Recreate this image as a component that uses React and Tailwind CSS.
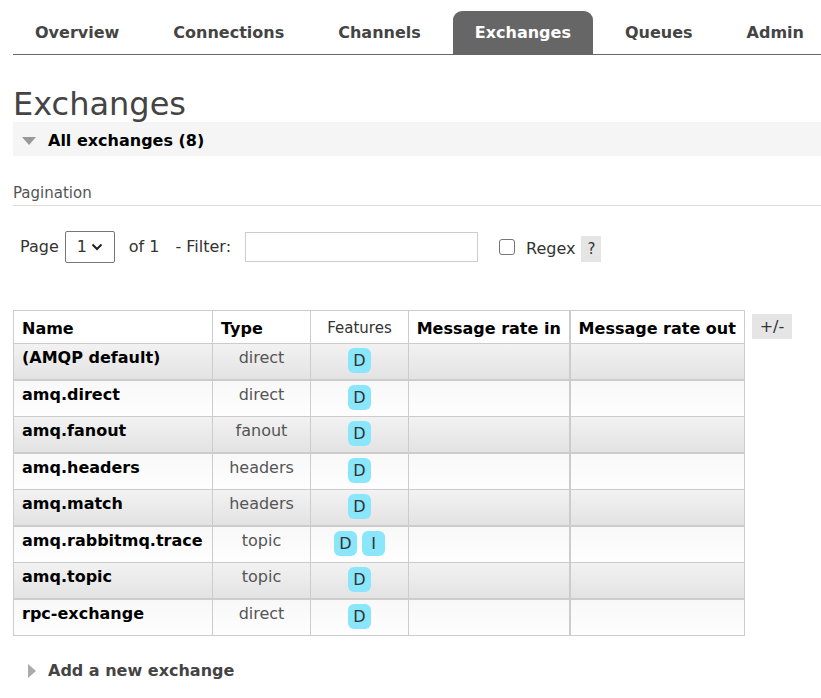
const tabs = ['Overview', 'Connections', 'Channels', 'Exchanges', 'Queues', 'Admin']

const rows = [
  { name: '(AMQP default)', type: 'direct', features: ['D'] },
  { name: 'amq.direct', type: 'direct', features: ['D'] },
  { name: 'amq.fanout', type: 'fanout', features: ['D'] },
  { name: 'amq.headers', type: 'headers', features: ['D'] },
  { name: 'amq.match', type: 'headers', features: ['D'] },
  { name: 'amq.rabbitmq.trace', type: 'topic', features: ['D', 'I'] },
  { name: 'amq.topic', type: 'topic', features: ['D'] },
  { name: 'rpc-exchange', type: 'direct', features: ['D'] },
]

export default function App() {
  return (
    <div className="min-h-screen bg-white text-[#444] font-['DejaVu_Sans',sans-serif] pl-[13px]">
      {/* nav */}
      <div className="flex items-end gap-[10px] h-[55px] border-b border-[#666]">
        {tabs.map((t) =>
          t === 'Exchanges' ? (
            <div key={t} className="h-[43px] px-[22px] bg-[#666] text-white rounded-t-[9px] flex items-center text-[16px] font-bold">
              {t}
            </div>
          ) : (
            <div key={t} className="h-[43px] px-[22px] flex items-center text-[16px] font-bold text-[#444]">
              {t}
            </div>
          )
        )}
      </div>

      <h1 className="text-[32px] leading-[36px] mt-[31px] text-[#444]">Exchanges</h1>

      <div className="h-[34px] bg-[#f5f5f5] flex items-center">
        <span className="ml-[9px] mt-[3px] w-0 h-0 border-l-[7px] border-r-[7px] border-t-[8px] border-l-transparent border-r-transparent border-t-[#999]" />
        <span className="ml-[12px] pt-[4px] text-[16px] font-bold text-black">All exchanges (8)</span>
      </div>

      <div className="mt-[27px] text-[15px] text-[#555] pb-[2px] border-b border-[#ddd] leading-[20px]">Pagination</div>

      <div className="flex items-center mt-[25px] pl-[7px] text-[16px] text-[#333]">
        <span>Page</span>
        <div className="ml-[6px] w-[50px] h-[32px] border border-[#767676] rounded-[2px] flex items-center justify-between px-[11px]">
          <span className="text-[16px]">1</span>
          <svg width="12" height="8" viewBox="0 0 12 8"><path d="M1.5 1.5 L6 6 L10.5 1.5" fill="none" stroke="#222" strokeWidth="2" /></svg>
        </div>
        <span className="ml-[14px]">of 1</span>
        <span className="ml-[16px]">- Filter:</span>
        <div className="ml-[14px] w-[233px] h-[30px] border border-[#ccc]" />
        <div className="ml-[21px] w-[16px] h-[16px] border border-[#767676] rounded-[3px]" />
        <span className="ml-[11px] mt-[4px] text-[16px]">Regex</span>
        <span className="ml-[6px] mt-[4px] h-[26px] w-[20px] bg-[#e5e5e5] flex items-center justify-center text-[15px]">?</span>
      </div>

      <div className="flex items-start mt-[47px]">
        <table className="border-collapse text-[16px] table-fixed w-[731px]">
          <colgroup>
            <col className="w-[199px]" />
            <col className="w-[98px]" />
            <col className="w-[98px]" />
            <col className="w-[161px]" />
            <col className="w-[175px]" />
          </colgroup>
          <thead>
            <tr className="h-[33px] bg-white text-black">
              <th className="border border-[#ccc] text-left font-bold px-[8px] pt-[3px]">Name</th>
              <th className="border border-[#ccc] text-left font-bold px-[8px] pt-[3px]">Type</th>
              <th className="border border-[#ccc] text-center font-normal text-[15px] text-[#333] pt-[3px]">Features</th>
              <th className="border border-[#ccc] border-r-2 text-center font-bold pt-[3px] whitespace-nowrap">Message rate in</th>
              <th className="border border-[#ccc] text-center font-bold pt-[3px] whitespace-nowrap">Message rate out</th>
            </tr>
          </thead>
          <tbody>
            {rows.map((r, i) => {
              const odd = i % 2 === 0
              const bg = odd
                ? 'bg-gradient-to-b from-[#f2f2f2] to-[#e2e2e2]'
                : 'bg-gradient-to-b from-[#f8f8f8] to-[#fefefe]'
              const bb = odd ? 'border-b-2' : ''
              return (
                <tr key={r.name} className={`h-[36.5px] ${bg}`}>
                  <td className={`border border-[#ccc] ${bb} align-top px-[8px] pt-[2px] font-bold text-black whitespace-nowrap`}>{r.name}</td>
                  <td className={`border border-[#ccc] ${bb} align-top text-center pt-[2px] text-[#555]`}>{r.type}</td>
                  <td className={`border border-[#ccc] ${bb} align-top text-center pt-[4px]`}>
                    <div className="flex justify-center gap-[5px]">
                      {r.features.map((f) => (
                        <span key={f} className="min-w-[23px] h-[25px] px-[5px] rounded-[6px] bg-[#8ae6fb] text-[#333] flex items-center justify-center text-[16px]">{f}</span>
                      ))}
                    </div>
                  </td>
                  <td className={`border border-[#ccc] border-r-2 ${bb}`}></td>
                  <td className={`border border-[#ccc] ${bb}`}></td>
                </tr>
              )
            })}
          </tbody>
        </table>
        <div className="ml-[7px] mt-[4px] h-[25px] w-[40px] bg-[#e5e5e5] flex items-center justify-center text-[16px] text-[#333]">+/-</div>
      </div>

      <div className="flex items-center mt-[23px] h-[24px]">
        <span className="ml-[15px] w-0 h-0 border-t-[7px] border-b-[7px] border-l-[8px] border-t-transparent border-b-transparent border-l-[#aaa]" />
        <span className="ml-[12px] text-[16px] font-bold text-[#444]">Add a new exchange</span>
      </div>
    </div>
  )
}
